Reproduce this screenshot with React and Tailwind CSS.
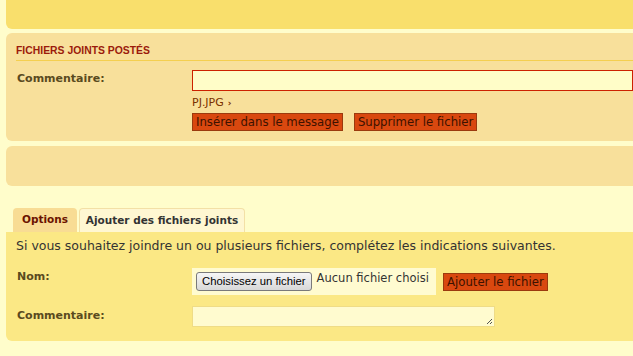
function Btn({ children }) {
  return (
    <button className="h-[18px] whitespace-nowrap border border-[#9b3a0e] bg-[#d9480f] px-[3px] text-[11.7px] leading-[16px] text-[#3d1200]">
      {children}
    </button>
  );
}

function App() {
  return (
    <div className="h-[356px] w-[633px] overflow-hidden bg-[#fffdcb] font-['DejaVu_Sans',Verdana,sans-serif] text-[12px]">
      <div className="ml-[6px] h-[29px] rounded-bl-[6px] bg-[#f9df6c]" />

      <div className="ml-[6px] mt-[4px] h-[108px] rounded-l-[6px] bg-[#f8e09b] pl-[10px] pt-[11px]">
        <div className="border-b border-[#f4cf4f] pb-[3px] font-['Liberation_Sans',Arial,sans-serif] text-[10.4px] font-bold leading-[13px] text-[#9b1b0b]">
          FICHIERS JOINTS POSTÉS
        </div>
        <div className="mt-[9px] flex">
          <div className="w-[176px] pl-px pt-[1px] text-[11px] font-bold text-[#5a4a1e]">Commentaire:</div>
          <div className="flex flex-1 flex-col">
            <div className="h-[21px] border border-[#cc2200] bg-[#fffdc8]" />
            <div className="mt-[6px] flex items-center gap-[4px] text-[11px] leading-[12px] text-[#7a3000]">
              PJ.JPG <span className="text-[9px] font-bold">›</span>
            </div>
            <div className="mt-[4px] flex gap-[11px]">
              <Btn>Insérer dans le message</Btn>
              <Btn>Supprimer le fichier</Btn>
            </div>
          </div>
        </div>
      </div>

      <div className="ml-[6px] mt-[5px] h-[40px] rounded-l-[6px] bg-[#f8e09b]" />

      <div className="ml-[13px] mt-[22px] flex gap-[2px]">
        <div className="flex h-[24px] w-[64px] items-center justify-center rounded-t-[4px] bg-[#f8dc94] text-[10.5px] font-bold text-[#6b1200]">
          Options
        </div>
        <div className="flex h-[24px] w-[166px] items-center justify-center rounded-t-[4px] border border-b-0 border-[#f3e0a6] bg-[#fff7d2] text-[10.5px] font-bold text-[#333]">
          Ajouter des fichiers joints
        </div>
      </div>

      <div className="ml-[6px] h-[109px] rounded-bl-[6px] bg-[#fbe885] pl-[10px] pt-[6px]">
        <div className="whitespace-nowrap text-[12.5px] leading-[16px] text-[#333]">
          Si vous souhaitez joindre un ou plusieurs fichiers, complétez les indications suivantes.
        </div>
        <div className="mt-[14px] flex">
          <div className="w-[176px] pl-px pt-[1px] text-[11px] font-bold text-[#5a4a1e]">Nom:</div>
          <div className="flex items-center gap-[7px]">
            <div className="flex h-[27px] w-[244px] shrink-0 items-center gap-[5px] overflow-hidden whitespace-nowrap bg-[#fffbd0] pl-[4px]">
              <span className="flex h-[19px] items-center rounded-[3px] border border-[#7a7a7a] bg-gradient-to-b from-[#f6f6f6] to-[#d8d8d8] px-[5px] font-['Liberation_Sans',Arial,sans-serif] text-[11.3px] text-black">
                Choisissez un fichier
              </span>
              <span className="-mt-[6px] text-[11.5px] text-[#333]">Aucun fichier choisi</span>
            </div>
            <Btn>Ajouter le fichier</Btn>
          </div>
        </div>
        <div className="mt-[11px] flex">
          <div className="w-[176px] pl-px pt-[2px] text-[11px] font-bold text-[#5a4a1e]">Commentaire:</div>
          <div className="relative h-[21px] w-[303px] border border-[#efdc86] bg-[#fffbcf]">
            <svg className="absolute bottom-[1px] right-[1px]" width="7" height="7" viewBox="0 0 7 7">
              <path d="M6 1 L1 6 M6 4 L4 6" stroke="#555" strokeWidth="1" />
            </svg>
          </div>
        </div>
      </div>
    </div>
  );
}

export default App;
